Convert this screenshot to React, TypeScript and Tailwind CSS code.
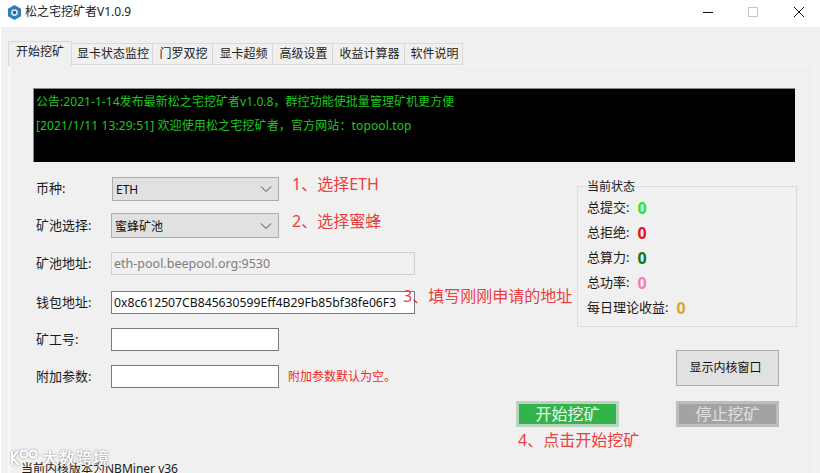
import React from 'react';

const Label: React.FC<{ text: string }> = ({ text }) => (
  <span className="w-[75px] shrink-0 text-[13px] text-[#1a1a1a]">{text}</span>
);

const Chevron = () => (
  <svg width="12" height="8" viewBox="0 0 12 8" className="ml-auto mr-[6px]">
    <polyline points="1,1.5 6,6.5 11,1.5" fill="none" stroke="#444" strokeWidth="1" />
  </svg>
);

const Select: React.FC<{ value: string; className: string }> = ({ value, className }) => (
  <div className={`flex items-center bg-[#e1e1e1] border border-[#adadad] text-[12px] text-[#111] pl-[3px] ${className}`}>
    <span className="pt-[2px]">{value}</span>
    <Chevron />
  </div>
);

const TABS = [
  { name: '显卡状态监控', width: 'w-[81px]' },
  { name: '门罗双挖', width: 'w-[60px]' },
  { name: '显卡超频', width: 'w-[60px]' },
  { name: '高级设置', width: 'w-[60px]' },
  { name: '收益计算器', width: 'w-[72px]' },
  { name: '软件说明', width: 'w-[58px]' },
];

const STATS = [
  { name: '总提交:', color: 'text-[#1eea32]' },
  { name: '总拒绝:', color: 'text-[#e8101c]' },
  { name: '总算力:', color: 'text-[#0b7a1e]' },
  { name: '总功率:', color: 'text-[#f47fb4]' },
  { name: '每日理论收益:', color: 'text-[#dca33a]' },
];

export default function App() {
  return (
    <div className="relative flex h-[473px] w-[820px] flex-col overflow-hidden bg-white font-['Noto_Sans','Noto_Sans_CJK_SC',sans-serif]">
      {/* Title bar */}
      <div className="flex h-[27px] shrink-0 items-center pl-[7px] pb-[3px]">
        <svg width="15" height="15" viewBox="0 0 16 16">
          <polygon points="8,0 15,4 15,12 8,16 1,12 1,4" fill="#2f7fb5" />
          <circle cx="8" cy="8" r="3.6" fill="#d8e8f2" />
          <circle cx="8" cy="8" r="1.8" fill="#24597f" />
        </svg>
        <span className="ml-[3px] text-[12px] text-[#222]">松之宅挖矿者V1.0.9</span>
        <div className="ml-auto flex items-center">
          <svg width="12" height="12" viewBox="0 0 12 12" className="mr-[33px]">
            <line x1="1" y1="6.5" x2="11" y2="6.5" stroke="#111" />
          </svg>
          <svg width="12" height="12" viewBox="0 0 12 12" className="mr-[34px]">
            <rect x="1.5" y="1.5" width="9" height="9" fill="none" stroke="#c4c4c4" />
          </svg>
          <svg width="12" height="12" viewBox="0 0 12 12" className="mr-[15px]">
            <path d="M1 1 L11 11 M11 1 L1 11" stroke="#111" />
          </svg>
        </div>
      </div>

      {/* Window body */}
      <div className="ml-[1px] flex flex-1 flex-col bg-[#f0f0f0] pl-[7px] pr-[5px] pt-[14px]">
        {/* Tabs */}
        <div className="flex h-[24px] shrink-0 items-end text-[12px] text-[#222]">
          <div className="z-10 -mb-px flex h-[25px] w-[64px] items-center justify-center border border-b-0 border-[#d9d9d9] bg-[#f0f0f0] pb-[4px]">
            开始挖矿
          </div>
          {TABS.map((tab) => (
            <div
              key={tab.name}
              className={`flex h-[22px] items-center justify-center border border-l-0 border-[#d9d9d9] bg-[#f0f0f0] pl-[2px] ${tab.width}`}
            >
              {tab.name}
            </div>
          ))}
        </div>

        {/* Tab panel */}
        <div className="flex flex-1 flex-col border-l-[3px] border-r border-t border-[#f8f8f8] pl-[22px] pr-[19px] pt-[22px]">
          <div className="h-[74px] shrink-0 border-l border-t border-[#888] bg-black pl-[2px] pt-[1px] text-[12px] leading-[24px] text-[#1fc71f]">
            <div className="tracking-[0.05px]">公告:2021-1-14发布最新松之宅挖矿者v1.0.8，群控功能使批量管理矿机更方便</div>
            <div className="tracking-[0.13px]">[2021/1/11 13:29:51] 欢迎使用松之宅挖矿者，官方网站：topool.top</div>
          </div>

          <div className="flex">
            {/* Form */}
            <div className="w-[544px] shrink-0 pl-[3px]">
              <div className="mt-[15px] flex h-[24px] items-center">
                <Label text="币种:" />
                <Select value="ETH" className="ml-[1px] h-[24px] w-[167px]" />
                <span className="ml-[13px] -mt-[10px] text-[16px] text-[#e9403f]">1、选择ETH</span>
              </div>
              <div className="mt-[12px] flex h-[25px] items-center">
                <Label text="矿池选择:" />
                <Select value="蜜蜂矿池" className="h-[25px] w-[168px]" />
                <span className="ml-[13px] -mt-[9px] text-[16px] text-[#e9403f]">2、选择蜜蜂</span>
              </div>
              <div className="mt-[14px] flex h-[23px] items-center">
                <Label text="矿池地址:" />
                <div className="flex h-[23px] w-[304px] items-center border border-[#cfcfcf] bg-[#f0f0f0] pl-[2px] pt-[2px] text-[12.5px] text-[#7d7d7d]">
                  eth-pool.beepool.org:9530
                </div>
              </div>
              <div className="relative mt-[16px] flex h-[23px] items-center">
                <Label text="钱包地址:" />
                <div className="flex h-[23px] w-[304px] items-center border border-[#7a7a7a] bg-white pl-[2px] pt-[2px] text-[12.2px] text-[#111]">
                  0x8c612507CB845630599Eff4B29Fb85bf38fe06F3
                </div>
                <span className="absolute left-[367px] -top-[7px] text-[16px] text-[#e9403f]">3、填写刚刚申请的地址</span>
              </div>
              <div className="mt-[14px] flex h-[23px] items-center">
                <Label text="矿工号:" />
                <div className="h-[23px] w-[168px] border border-[#7a7a7a] bg-white" />
              </div>
              <div className="mt-[14px] flex h-[23px] items-center">
                <Label text="附加参数:" />
                <div className="h-[23px] w-[168px] border border-[#7a7a7a] bg-white" />
                <span className="ml-[9px] text-[12px] text-[#ee2a2a]">附加参数默认为空。</span>
              </div>
            </div>

            {/* Current status */}
            <div className="flex w-[220px] shrink-0 flex-col">
              <div className="relative mt-[24px] h-[141px] border border-[#dcdcdc] pl-[9px] pt-[8px] text-[13px] text-[#1a1a1a]">
                <span className="absolute -top-[8px] left-[8px] bg-[#f0f0f0] px-[1px] text-[12px] leading-[16px]">当前状态</span>
                {STATS.map((stat) => (
                  <div key={stat.name} className="flex h-[25px] items-center">
                    {stat.name}
                    <span className={`ml-[8px] text-[16px] font-bold ${stat.color}`}>0</span>
                  </div>
                ))}
              </div>
              <button className="ml-[99px] mt-[23px] h-[36px] w-[103px] border border-[#adadad] bg-[#e1e1e1] pr-[4px] text-[12px] text-[#111]">
                显示内核窗口
              </button>
            </div>
          </div>

          {/* Start / stop */}
          <div className="mt-[13px] flex pl-[483px]">
            <button className="flex h-[26px] w-[103px] items-center justify-center border-[3px] border-[#bcd3bf] bg-[#33b44a] text-[16px] text-[#eef8ee]">
              开始挖矿
            </button>
            <button className="ml-[57px] flex h-[26px] w-[103px] items-center justify-center border-[3px] border-[#bdbdbd] bg-[#a3a3a3] text-[16px] text-[#e0e0e0]">
              停止挖矿
            </button>
          </div>
          <div className="ml-[485px] mt-[1px] text-[16px] leading-[24px] text-[#e9403f]">4、点击开始挖矿</div>
          <div className="-ml-[12px] mt-[8px] whitespace-nowrap text-[12px] leading-[18px] text-[#1a1a1a]">当前内核版本为NBMiner v36</div>
        </div>
      </div>

      {/* Watermark */}
      <div className="absolute left-[9px] top-[446px] flex items-center gap-[3px] text-white [filter:drop-shadow(0_0_1px_#8a8a8a)]">
        <svg width="30" height="20" viewBox="0 0 30 20" fill="none" stroke="currentColor" strokeWidth="2">
          <path d="M3 3 V17 M3 10 L9 3 M3 10 L10 17" />
          <circle cx="15" cy="6" r="3.5" />
          <circle cx="24" cy="6" r="3.5" />
        </svg>
        <span className="text-[16px] font-medium tracking-[1px]">大数跨境</span>
      </div>
    </div>
  );
}
